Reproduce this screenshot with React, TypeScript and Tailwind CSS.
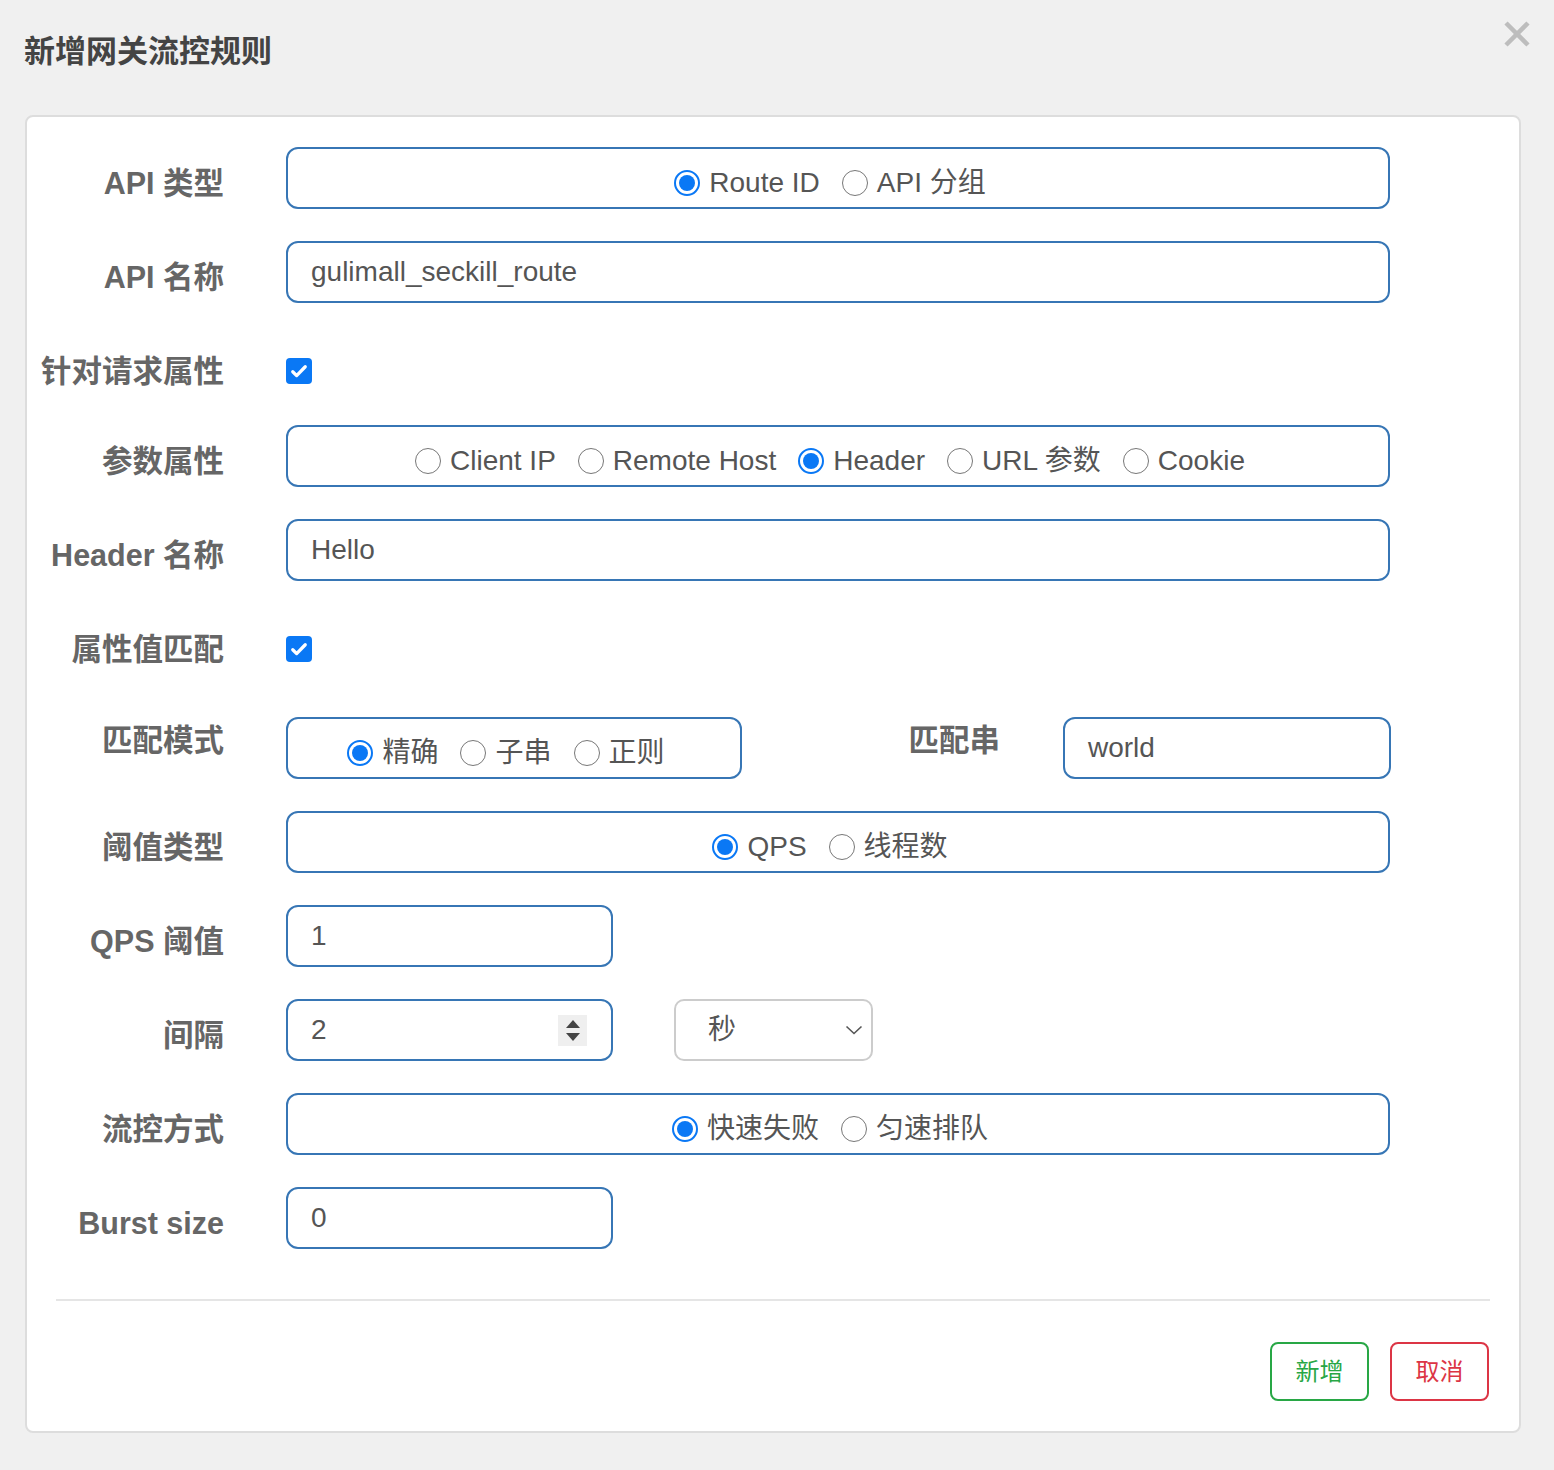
import React from "react";

const FONT = "font-['Liberation_Sans','Noto_Sans_CJK_SC',sans-serif]";

/** Radio button with label */
function Radio({ label, checked }: { label: string; checked?: boolean }) {
  return (
    <span className="flex items-center">
      {checked ? (
        <span className="flex h-[26px] w-[26px] items-center justify-center rounded-full border-2 border-[#0a78f5] bg-white">
          <span className="h-[16px] w-[16px] rounded-full bg-[#0a78f5]" />
        </span>
      ) : (
        <span className="h-[26px] w-[26px] rounded-full border-[1.5px] border-[#777] bg-white" />
      )}
      <span className="ml-[9px] text-[28px] leading-[32px] text-[#555]">{label}</span>
    </span>
  );
}

function RadioBox({ items, checked, width = "w-[1104px]" }: { items: string[]; checked: number; width?: string }) {
  return (
    <div className={`${width} flex h-[62px] items-center justify-center gap-[22px] rounded-[12px] border-2 border-[#3776b5] bg-white pr-[16px] pt-[10px]`}>
      {items.map((it, i) => (
        <Radio key={it} label={it} checked={i === checked} />
      ))}
    </div>
  );
}

function TextBox({ value, width = "w-[1104px]", children }: { value: string; width?: string; children?: React.ReactNode }) {
  return (
    <div className={`${width} flex h-[62px] items-center rounded-[12px] border-2 border-[#3776b5] bg-white pl-[23px] pr-[24px]`}>
      <span className="flex-1 text-[28px] leading-[32px] text-[#555]">{value}</span>
      {children}
    </div>
  );
}

function Label({ text, top = "mt-[18px]" }: { text: string; top?: string }) {
  return (
    <div className={`w-[197px] shrink-0 whitespace-nowrap text-right text-[30.5px] font-bold leading-[36px] text-[#666] ${top}`}>
      {text}
    </div>
  );
}

function Checkbox() {
  return (
    <span className="mt-[23px] flex h-[26px] w-[26px] items-center justify-center rounded-[4px] bg-[#0a78f5]">
      <svg width="20" height="20" viewBox="0 0 16 16" fill="none">
        <path d="M3 8.6l3.1 3.1L13 4.6" stroke="white" strokeWidth="2.6" strokeLinecap="round" strokeLinejoin="round" />
      </svg>
    </span>
  );
}

export default function App() {
  return (
    <div className={`min-h-[1470px] w-[1554px] bg-[#f0f0f0] ${FONT}`}>
      {/* 标题栏 */}
      <div className="flex h-[115px] items-start justify-between">
        <h1 className="pl-[24px] pt-[34px] text-[31px] font-bold leading-[36px] text-[#444]">新增网关流控规则</h1>
        <svg className="mr-[24px] mt-[21px]" width="26" height="26" viewBox="0 0 26 26">
          <path d="M2 2L24 24M24 2L2 24" stroke="#bdbdbd" strokeWidth="4.5" />
        </svg>
      </div>

      {/* 表单卡片 */}
      <div className="ml-[25px] w-[1496px] rounded-[8px] border-2 border-[#ddd] bg-white pt-[30px] pb-[30px]">
        <div className="flex flex-col gap-[32px]">
          <div className="flex h-[62px] items-start">
            <Label text="API 类型" />
            <div className="ml-[62px]">
              <RadioBox items={["Route ID", "API 分组"]} checked={0} />
            </div>
          </div>

          <div className="flex h-[62px] items-start">
            <Label text="API 名称" />
            <div className="ml-[62px]">
              <TextBox value="gulimall_seckill_route" />
            </div>
          </div>

          <div className="flex h-[58px] items-start">
            <Label text="针对请求属性" />
            <div className="ml-[62px]">
              <Checkbox />
            </div>
          </div>

          <div className="flex h-[62px] items-start">
            <Label text="参数属性" />
            <div className="ml-[62px]">
              <RadioBox items={["Client IP", "Remote Host", "Header", "URL 参数", "Cookie"]} checked={2} />
            </div>
          </div>

          <div className="flex h-[62px] items-start">
            <Label text="Header 名称" />
            <div className="ml-[62px]">
              <TextBox value="Hello" />
            </div>
          </div>

          <div className="flex h-[72px] items-start">
            <Label text="属性值匹配" />
            <div className="ml-[62px]">
              <Checkbox />
            </div>
          </div>

          <div className="flex h-[62px] items-start">
            <Label text="匹配模式" top="mt-[5px]" />
            <div className="ml-[62px]">
              <RadioBox items={["精确", "子串", "正则"]} checked={0} width="w-[456px]" />
            </div>
            <div className="mt-[5px] w-[258px] text-right text-[30.5px] font-bold leading-[36px] text-[#666]">匹配串</div>
            <div className="ml-[63px]">
              <TextBox value="world" width="w-[328px]" />
            </div>
          </div>

          <div className="flex h-[62px] items-start">
            <Label text="阈值类型" />
            <div className="ml-[62px]">
              <RadioBox items={["QPS", "线程数"]} checked={0} />
            </div>
          </div>

          <div className="flex h-[62px] items-start">
            <Label text="QPS 阈值" />
            <div className="ml-[62px]">
              <TextBox value="1" width="w-[327px]" />
            </div>
          </div>

          <div className="flex h-[62px] items-start">
            <Label text="间隔" />
            <div className="ml-[62px]">
              <TextBox value="2" width="w-[327px]">
                {/* 数字输入框的上下箭头 */}
                <span className="flex h-[31px] w-[29px] flex-col items-center justify-center gap-[5px] bg-[#efefef]">
                  <svg width="14" height="8" viewBox="0 0 14 8">
                    <path d="M7 0L14 8H0Z" fill="#444" />
                  </svg>
                  <svg width="14" height="8" viewBox="0 0 14 8">
                    <path d="M0 0H14L7 8Z" fill="#444" />
                  </svg>
                </span>
              </TextBox>
            </div>
            <div className="ml-[61px] flex h-[62px] w-[199px] items-center rounded-[10px] border-2 border-[#ccc] bg-white pl-[32px] pr-[8px]">
              <span className="flex-1 text-[28px] leading-[32px] text-[#555]">秒</span>
              <svg width="18" height="10" viewBox="0 0 18 10" fill="none">
                <path d="M1.5 1.5L9 8.5L16.5 1.5" stroke="#555" strokeWidth="1.6" />
              </svg>
            </div>
          </div>

          <div className="flex h-[62px] items-start">
            <Label text="流控方式" />
            <div className="ml-[62px]">
              <RadioBox items={["快速失败", "匀速排队"]} checked={0} />
            </div>
          </div>

          <div className="flex h-[62px] items-start">
            <Label text="Burst size" />
            <div className="ml-[62px]">
              <TextBox value="0" width="w-[327px]" />
            </div>
          </div>
        </div>

        <div className="mx-[29px] mt-[50px] h-[2px] bg-[#e5e5e5]" />

        <div className="mt-[41px] flex justify-end gap-[21px] pr-[30px]">
          <button className="h-[59px] w-[99px] rounded-[8px] border-2 border-[#28a745] text-[24px] text-[#28a745]">新增</button>
          <button className="h-[59px] w-[99px] rounded-[8px] border-2 border-[#dc3545] text-[24px] text-[#dc3545]">取消</button>
        </div>
      </div>
    </div>
  );
}
